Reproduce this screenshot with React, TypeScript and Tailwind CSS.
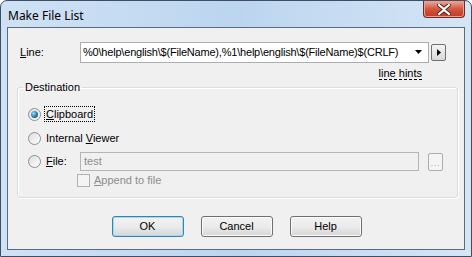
import React from 'react';

const ui = { fontFamily: '"Liberation Sans", Arial, sans-serif' };

function Radio({ checked }: { checked?: boolean }) {
  return (
    <span className="relative w-[13px] h-[13px] rounded-full border border-[#8e8f8f] bg-gradient-to-br from-[#dcdcdc] to-[#ffffff] flex items-center justify-center">
      {checked && (
        <span className="w-[7px] h-[7px] rounded-full bg-[radial-gradient(circle_at_35%_35%,#8ee0ff,#1b6fb0_60%,#0d3f6e)]" />
      )}
    </span>
  );
}

function Button({ label, primary }: { label: string; primary?: boolean }) {
  return (
    <button
      className={
        'w-[72px] h-[21px] rounded-[3px] border text-[11px] text-black bg-gradient-to-b from-[#f2f2f2] via-[#ebebeb] to-[#d6d6d6] ' +
        (primary ? 'border-[#3c7fb1] shadow-[inset_0_0_0_1px_#9fdcf6]' : 'border-[#707070] shadow-[inset_0_0_0_1px_#fbfbfb]')
      }
    >
      {label}
    </button>
  );
}

export default function App() {
  return (
    <div className="w-[472px] h-[257px] bg-white" style={ui}>
      <div className="w-full h-full flex flex-col rounded-t-[7px] border border-[#3f4e62] bg-gradient-to-r from-[#cfe2f5] via-[#bcd5ef] to-[#d4e5f6]">
        {/* title bar */}
        <div className="h-[26px] flex items-start justify-between">
          <span className="pl-[7px] pt-[6px] text-[12px] text-black" style={{ fontFamily: '"Noto Sans", "Liberation Sans", sans-serif' }}>
            Make File List
          </span>
          <div className="mr-[6px] w-[42px] h-[17px] rounded-b-[4px] border border-t-0 border-[#6b2a22] bg-gradient-to-b from-[#e9a99a] via-[#d2553f] to-[#c23a22] flex items-center justify-center shadow-[inset_0_0_0_1px_#eda08e]">
            <svg width="14" height="11" viewBox="0 0 14 11">
              <path d="M2 1 L7 5 L12 1 M2 10 L7 6 L12 10" stroke="#4a1c16" strokeWidth="4" fill="none" strokeLinecap="square" />
              <path d="M2 1 L7 5 L12 1 M2 10 L7 6 L12 10" stroke="#ffffff" strokeWidth="2.2" fill="none" strokeLinecap="square" />
            </svg>
          </div>
        </div>
        {/* client */}
        <div className="mx-[6px] mb-[6px] flex-1 border border-[#5b6b7e] bg-[#f0f0f0] flex flex-col text-[11px] text-black">
          <div className="mt-[13px] ml-[12px] h-[22px] flex items-center">
            <span className="w-[60px]">
              <u>L</u>ine:
            </span>
            <div className="w-[349px] h-[21px] border border-[#abadb3] bg-white flex items-center pl-[2px] pr-[6px]">
              <span className="flex-1 whitespace-nowrap overflow-hidden tracking-[-0.2px]">
                %0\help\english\$(FileName),%1\help\english\$(FileName)$(CRLF)
              </span>
              <svg width="7" height="4" viewBox="0 0 7 4">
                <path d="M0 0 H7 L3.5 4 Z" fill="#000" />
              </svg>
            </div>
            <div className="ml-[2px] w-[15px] h-[17px] rounded-[2px] border border-[#707070] bg-gradient-to-b from-[#f4f4f4] to-[#d8d8d8] flex items-center justify-center">
              <svg width="4" height="7" viewBox="0 0 4 7">
                <path d="M0 0 L4 3.5 L0 7 Z" fill="#000" />
              </svg>
            </div>
          </div>
          <div className="mt-[4px] mr-[42px] flex justify-end">
            <span className="border-b border-dashed border-black leading-[12px]">line hints</span>
          </div>
          <fieldset className="mt-[1px] ml-[9px] mr-[6px] h-[117px] border border-[#d5dfe5] rounded-[3px] shadow-[inset_1px_1px_0_#fff,1px_1px_0_#fff]">
            <legend className="ml-[5px] px-[2px] leading-[13px]">Destination</legend>
            <div className="ml-[10px] mt-[12px] h-[16px] flex items-center gap-[4px]">
              <Radio checked />
              <span className="px-[1px] outline outline-1 outline-dotted outline-black leading-[14px]">
                <u>C</u>lipboard
              </span>
            </div>
            <div className="ml-[10px] mt-[8px] h-[16px] flex items-center gap-[4px]">
              <Radio />
              <span className="px-[1px]">
                Internal <u>V</u>iewer
              </span>
            </div>
            <div className="ml-[10px] mt-[6px] h-[19px] flex items-center gap-[4px]">
              <Radio />
              <span className="px-[1px] w-[31px]">
                <u>F</u>ile:
              </span>
              <div className="w-[339px] h-[19px] border border-[#b5b5b5] bg-[#f0f0f0] text-[#8d8d8d] pl-[3px] flex items-center">test</div>
              <div className="ml-[5px] w-[15px] h-[18px] rounded-[2px] border border-[#adadad] bg-[#f4f4f4] flex items-end justify-center pb-[3px]">
                <span className="text-[8px] leading-[6px] text-[#8d8d8d] tracking-[1px]">...</span>
              </div>
            </div>
            <div className="mt-[2px] ml-[59px] h-[14px] flex items-center gap-[4px]">
              <span className="w-[13px] h-[13px] border border-[#b1b1b1] bg-[#f4f4f4]" />
              <span className="text-[#8d8d8d]">
                <u>A</u>ppend to file
              </span>
            </div>
          </fieldset>
          <div className="mt-[18px] flex justify-center gap-[17px] pl-[1px]">
            <Button label="OK" primary />
            <Button label="Cancel" />
            <Button label="Help" />
          </div>
        </div>
      </div>
    </div>
  );
}
